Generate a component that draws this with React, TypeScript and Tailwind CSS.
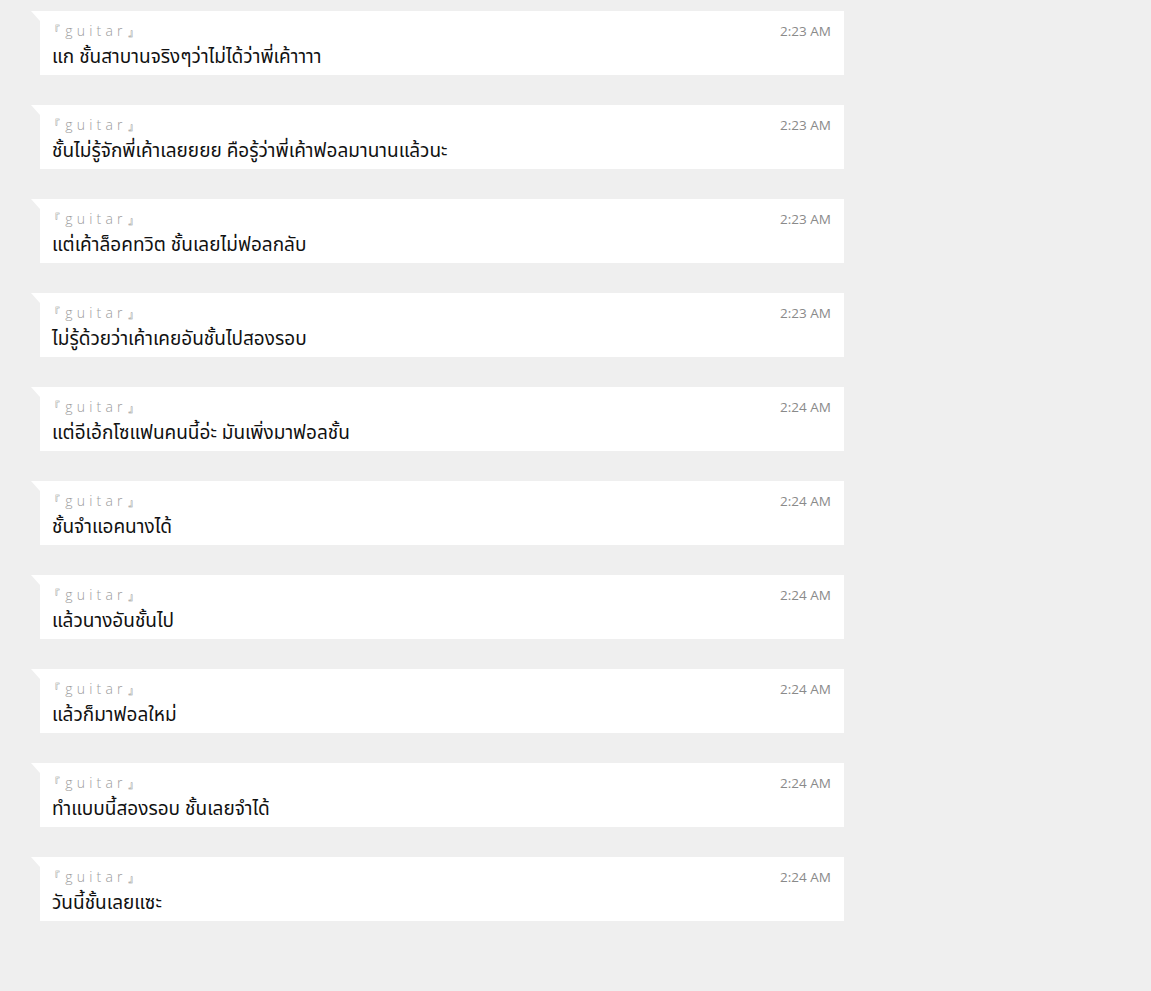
const messages = [
  { time: '2:23 AM', text: 'แก ชั้นสาบานจริงๆว่าไม่ได้ว่าพี่เค้าาาา' },
  { time: '2:23 AM', text: 'ชั้นไม่รู้จักพี่เค้าเลยยยย คือรู้ว่าพี่เค้าฟอลมานานแล้วนะ' },
  { time: '2:23 AM', text: 'แต่เค้าล็อคทวิต ชั้นเลยไม่ฟอลกลับ' },
  { time: '2:23 AM', text: 'ไม่รู้ด้วยว่าเค้าเคยอันชั้นไปสองรอบ' },
  { time: '2:24 AM', text: 'แต่อีเอ้กโซแฟนคนนี้อ่ะ มันเพิ่งมาฟอลชั้น' },
  { time: '2:24 AM', text: 'ชั้นจำแอคนางได้' },
  { time: '2:24 AM', text: 'แล้วนางอันชั้นไป' },
  { time: '2:24 AM', text: 'แล้วก็มาฟอลใหม่' },
  { time: '2:24 AM', text: 'ทำแบบนี้สองรอบ ชั้นเลยจำได้' },
  { time: '2:24 AM', text: 'วันนี้ชั้นเลยแซะ' },
]

function Bubble({ time, text }: { time: string; text: string }) {
  return (
    <div className="relative ml-10 w-[804px] h-16 bg-white px-3 pt-[13px]">
      {/* tail */}
      <svg className="absolute -left-[9px] top-0" width="9" height="10" viewBox="0 0 9 10">
        <polygon points="0,0 9,0 9,10" fill="#ffffff" />
      </svg>
      <div className="flex items-start justify-between h-[22px]">
        <span className="-ml-[5px] text-[14px] leading-[14px] tracking-[0.3em] text-[#9c9c9c] font-light">
          <span className="text-[#888]">『</span>guitar<span className="text-[#888]">』</span>
        </span>
        <span className="text-[13.5px] leading-[14px] text-[#8a8a8a] pr-px">{time}</span>
      </div>
      <div className="text-[19px] leading-[24px] text-[#111] -mt-[2px]">{text}</div>
    </div>
  )
}

export default function App() {
  return (
    <div
      className="min-h-[991px] w-full bg-[#efefef] pt-[11px] flex flex-col gap-[30px]"
      style={{ fontFamily: '"Open Sans", "Noto Sans", "Noto Sans Thai", "DejaVu Sans", sans-serif' }}
    >
      {messages.map((m, i) => (
        <Bubble key={i} time={m.time} text={m.text} />
      ))}
    </div>
  )
}
